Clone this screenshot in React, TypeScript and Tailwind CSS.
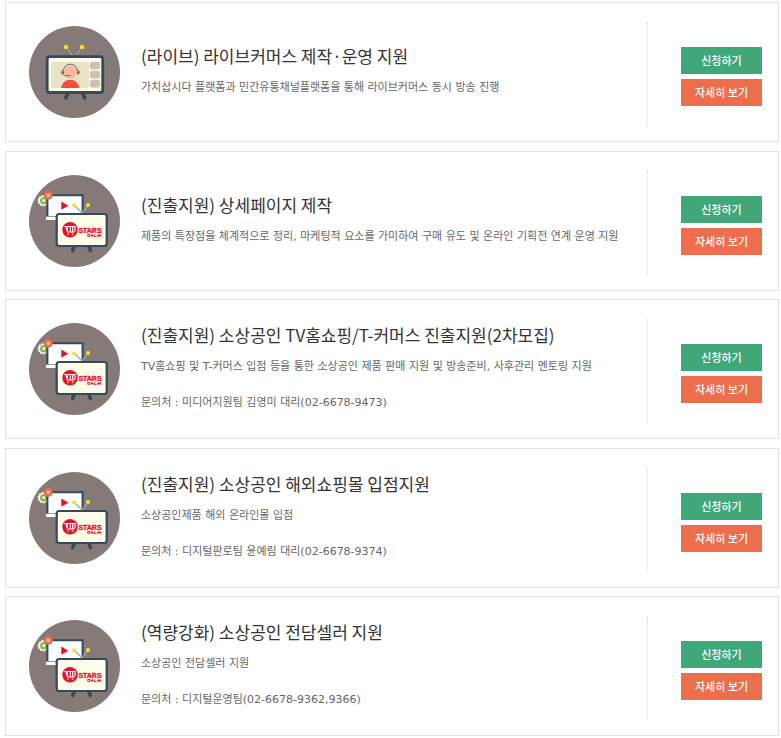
type Program = {
  icon: "live" | "stars";
  title: string;
  description: string;
  contact?: string;
};

const programs: Program[] = [
  {
    icon: "live",
    title: "(라이브) 라이브커머스 제작·운영 지원",
    description: "가치삽시다 플랫폼과 민간유통채널플랫폼을 통해 라이브커머스 동시 방송 진행",
  },
  {
    icon: "stars",
    title: "(진출지원) 상세페이지 제작",
    description: "제품의 특장점을 체계적으로 정리, 마케팅적 요소를 가미하여 구매 유도 및 온라인 기획전 연계 운영 지원",
  },
  {
    icon: "stars",
    title: "(진출지원) 소상공인 TV홈쇼핑/T-커머스 진출지원(2차모집)",
    description: "TV홈쇼핑 및 T-커머스 입점 등을 통한 소상공인 제품 판매 지원 및 방송준비, 사후관리 멘토링 지원",
    contact: "문의처 : 미디어지원팀 김영미 대리(02-6678-9473)",
  },
  {
    icon: "stars",
    title: "(진출지원) 소상공인 해외쇼핑몰 입점지원",
    description: "소상공인제품 해외 온라인몰 입점",
    contact: "문의처 : 디지털판로팀 윤예림 대리(02-6678-9374)",
  },
  {
    icon: "stars",
    title: "(역량강화) 소상공인 전담셀러 지원",
    description: "소상공인 전담셀러 지원",
    contact: "문의처 : 디지털운영팀(02-6678-9362,9366)",
  },
];

function LiveIcon() {
  return (
    <svg viewBox="0 0 91 92" className="h-[92px] w-[91px] shrink-0" aria-hidden="true">
      <ellipse cx="45.5" cy="46" rx="45.5" ry="46" fill="#857a77" />
      <g stroke="#aaa19c" strokeWidth="1.2">
        <path d="M37 21 44 30M53 21 46.5 30" />
      </g>
      <circle cx="37" cy="21" r="2.2" fill="#f8df26" />
      <circle cx="53" cy="21" r="2.2" fill="#f8df26" />
      <path d="M39 67 36.8 72M53.5 67l2.2 5" stroke="#34495a" strokeWidth="3.6" strokeLinecap="round" />
      <rect x="18.2" y="30.7" width="55.5" height="35.8" rx="2.6" fill="#fffee6" stroke="#34495a" strokeWidth="2.8" />
      <rect x="21.8" y="35.8" width="38.4" height="26.2" rx="2" fill="#e6e4c6" />
      <g fill="#cdc1b1">
        <rect x="61" y="35.8" width="10" height="7.6" rx="2.2" />
        <rect x="61" y="44.8" width="10" height="7.6" rx="2.2" />
        <rect x="61" y="53.8" width="10" height="7.6" rx="2.2" />
      </g>
      <circle cx="41.4" cy="46.2" r="6.4" fill="#f9b7a2" />
      <path d="M32 62c1-5 4.6-8.2 9.2-8.2s8.2 3.2 9.2 8.2z" fill="#f64b3f" />
      <ellipse cx="33.2" cy="46.3" rx="1.3" ry="1.9" fill="#f64b3f" />
      <ellipse cx="49.6" cy="46.3" rx="1.3" ry="1.9" fill="#f64b3f" />
      <path d="M34.3 48.5v-3.2a7.1 7.1 0 0 1 14.2 0v3.2M34.3 48c.4 1.3 1.3 1.7 2.4 1.7h4.8" fill="none" stroke="#6c6963" strokeWidth="1" />
    </svg>
  );
}

function StarsIcon() {
  return (
    <svg viewBox="0 0 91 92" className="h-[92px] w-[91px] shrink-0" aria-hidden="true">
      <ellipse cx="45.5" cy="46" rx="45.5" ry="46" fill="#857a77" />
      <circle cx="14.3" cy="25.7" r="5" fill="#f8f8f2" stroke="#f8f8f2" strokeWidth="1.4" strokeDasharray="1.8 1.2" />
      <circle cx="14.8" cy="25.7" r="2.6" fill="#fff" stroke="#8cba3f" strokeWidth="2.4" />
      <path d="M18.4 42V20.2h35.2v20" fill="#fff" stroke="#34495a" strokeWidth="2" />
      <path d="M17 41.5h12V45H17z" fill="#fff" />
      <path d="M17 41.5h11" stroke="#7f8588" strokeWidth=".8" />
      <circle cx="19.3" cy="20.3" r="3.3" fill="#c4bab4" stroke="#f2693f" strokeWidth="2.3" />
      <path d="m32.3 26.6 7 4.1-7 4.1z" fill="#e80d32" />
      <path d="m45 30.3 8.3 7.7L59 30" fill="none" stroke="#aaa19c" strokeWidth="1.3" />
      <circle cx="45" cy="30.3" r="2" fill="#f8df26" />
      <circle cx="59" cy="30" r="2" fill="#f8df26" />
      <path d="m45.5 71-1.9 4.5M59.6 71l1.9 4.5" stroke="#34495a" strokeWidth="3.4" strokeLinecap="round" />
      <rect x="27.7" y="39" width="50" height="32" rx="2.4" fill="#fffee9" stroke="#34495a" strokeWidth="2.2" />
      <circle cx="41" cy="54.7" r="7.7" fill="#e80d32" />
      <path d="m35.2 51.2 1.5.2 1.6 5.3v-5.2h3v5M41.3 51.500H46v5M43.7 51.500v5M38 57h7.500" fill="none" stroke="#fff" strokeWidth="1.1" />
      <circle cx="38.9" cy="59.3" r="1" fill="#ffcb28" />
      <circle cx="43.6" cy="59.3" r="1" fill="#ffcb28" />
      <text x="49.4" y="57.5" fill="#e80d32" stroke="#e80d32" strokeWidth=".3" className="font-['Liberation_Sans',sans-serif] text-[7px] font-bold">
        STARS
      </text>
      <path d="M58.7 59.5h2.3v1.800h-2.3zM61.8 60.500h2.500M63 59v3M65.3 59.2v2.500h2.3M68.3 60.500h3.500M69.2 59v3M71.2 59v3" fill="none" stroke="#e80d32" strokeWidth=".9" />
    </svg>
  );
}

function ProgramCard({ program }: { program: Program }) {
  return (
    <li className="flex h-[140px] items-center border border-[#e2e2e2] bg-white pl-[23px] odd:mb-[9px] even:mb-2 last:mb-0">
      {program.icon === "live" ? <LiveIcon /> : <StarsIcon />}
      <div className="min-w-0 flex-1 pl-[21px]">
        <h2 className="text-[17px] leading-8 text-[#333]">{program.title}</h2>
        <div className="font-['DejaVu_Sans','Noto_Sans_CJK_KR',sans-serif] text-[11px] leading-8 text-[#666]">
          <p>{program.description}</p>
          {program.contact && <p className="mt-1">{program.contact}</p>}
        </div>
      </div>
      <div className="mt-1 flex h-[104px] shrink-0 flex-col justify-center gap-[5px] border-l border-dotted border-[#dcdcdc] pt-1 pr-4 pl-[33px]">
        <button type="button" className="h-[27px] w-[81px] bg-[#40a878] text-[11px] font-medium text-white">
          신청하기
        </button>
        <button type="button" className="h-[27px] w-[81px] bg-[#ed6e4c] text-[11px] font-medium text-white">
          자세히 보기
        </button>
      </div>
    </li>
  );
}

export default function App() {
  return (
    <main className="bg-white pt-[2px] pr-[2px] pb-[2px] pl-[5px] font-['Noto_Sans_CJK_KR',sans-serif]">
      <ul>
        {programs.map((program) => (
          <ProgramCard key={program.title} program={program} />
        ))}
      </ul>
    </main>
  );
}
